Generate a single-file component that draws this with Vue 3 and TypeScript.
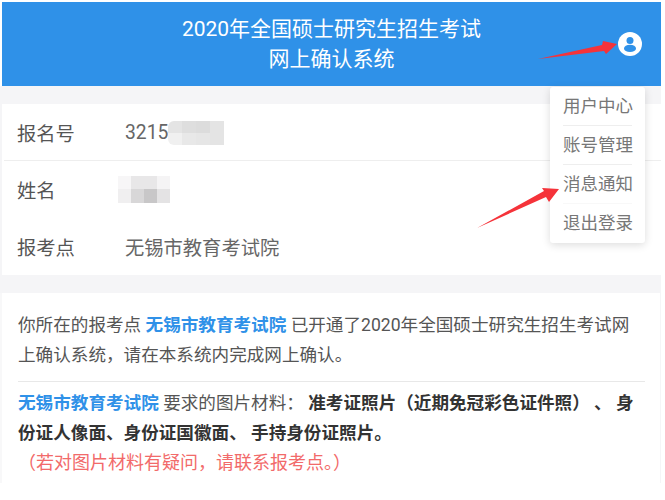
<script setup lang="ts">
const menu: string[] = ['用户中心', '账号管理', '消息通知', '退出登录']
const idBlur: string[] = ['#e4e4e4', '#dedede', '#dcdcdc', '#e4e4e4', '#f0f0f0', '#e8e8e8', '#e6e6e6', '#e4e4e4']
const nameBlur: string[] = ['#f7f6f7', '#e8e7e8', '#e8e7e8', '#f5f4f5', '#f0eff0', '#d8d7d8', '#c8c7c8', '#e4e3e4']
</script>

<template>
  <div class="page">
    <header class="top">
      <div class="title">2020年全国硕士研究生招生考试<br />网上确认系统</div>
      <svg class="avatar" viewBox="0 0 24 24" width="24" height="24">
        <circle cx="12" cy="12" r="12" fill="#fff" />
        <circle cx="12" cy="8.6" r="3.5" fill="#2f91e8" />
        <ellipse cx="12" cy="16.4" rx="6" ry="3.6" fill="#2f91e8" />
      </svg>
    </header>

    <section class="card info">
      <div class="row line">
        <span class="label">报名号</span>
        <span class="value">3215</span>
        <div class="mosaic id-mosaic">
          <i v-for="(c, i) in idBlur" :key="i" :style="{ background: c }"></i>
        </div>
      </div>
      <div class="row">
        <span class="label">姓名</span>
        <div class="mosaic name-mosaic">
          <i v-for="(c, i) in nameBlur" :key="i" :style="{ background: c }"></i>
        </div>
      </div>
      <div class="row">
        <span class="label">报考点</span>
        <span class="value">无锡市教育考试院</span>
      </div>
    </section>

    <section class="card notice">
      <p class="para first">
        你所在的报考点 <b class="blue">无锡市教育考试院</b> 已开通了2020年全国硕士研究生招生考试网上确认系统，请在本系统内完成网上确认。
      </p>
      <p class="para">
        <b class="blue">无锡市教育考试院</b> 要求的图片材料： <b class="dark">准考证照片（近期免冠彩色证件照） 、 身份证人像面、身份证国徽面、 手持身份证照片。</b>
      </p>
      <p class="para red">（若对图片材料有疑问，请联系报考点。）</p>
    </section>

    <ul class="menu">
      <li v-for="m in menu" :key="m">{{ m }}</li>
    </ul>

    <svg class="arrows" viewBox="0 0 665 500" width="665" height="500">
      <polygon fill="#f5333a" points="538,59 602,45 603,41 617,44 606,54 604,51" />
      <polygon fill="#f5333a" points="477,228 544,191 542,188 559,189 549,202 546,197" />
    </svg>
  </div>
</template>

<style>
html, body { margin: 0; background: #fff; }
</style>

<style scoped>
.page {
  position: relative;
  width: 665px;
  height: 500px;
  overflow: hidden;
  box-sizing: border-box;
  padding: 2px 4px 0 0;
  background: #fff;
  font-family: Roboto, "Noto Sans CJK SC", sans-serif;
  color: #555;
}
.top {
  position: relative;
  height: 84px;
  margin-left: 2px;
  background: #2f91e8;
  color: #fff;
  display: flex;
  align-items: center;
  justify-content: center;
}
.title {
  font-size: 21px;
  line-height: 30px;
  text-align: center;
}
.avatar { position: absolute; right: 19px; top: 30px; }
.info {
  border-top: 18px solid #f5f5f7;
  border-bottom: 18px solid #f5f5f7;
  background: #fff;
  box-shadow: inset 2px 0 0 #f5f5f7;
}
.row {
  display: flex;
  align-items: center;
  height: 57px;
  padding-left: 17px;
  font-size: 19.3px;
  color: #555;
}
.row.line { box-shadow: inset 0 -1px 0 #eee; margin-left: 4px; padding-left: 13px; }
.label { width: 108px; flex: none; }
.value { color: #666; }
.mosaic { display: grid; }
.mosaic i { display: block; }
.id-mosaic {
  grid-template-columns: repeat(4, 14px);
  grid-auto-rows: 12px;
  border-radius: 6px 0 0 6px;
  overflow: hidden;
}
.name-mosaic {
  grid-template-columns: repeat(4, 13px);
  grid-auto-rows: 13.5px;
  margin-left: -7px;
  margin-top: -1px;
}
.notice {
  height: 190px;
  padding: 17px 16px 0 18px;
  box-sizing: border-box;
  background: #fff;
  box-shadow: inset 2px 0 0 #f8f8f9, inset -1px 0 0 #f5f5f7;
}
.para {
  margin: 0;
  font-size: 17.6px;
  line-height: 30px;
  color: #555;
}
.para.first {
  padding-bottom: 11px;
  border-bottom: 1px solid #e8e8e8;
  margin-bottom: 6px;
}
.blue { color: #2f91e8; font-weight: 700; }
.dark { color: #333; font-weight: 700; }
.para.red { color: #f26a6a; font-size: 18px; }
.menu {
  position: absolute;
  left: 550px;
  top: 87px;
  width: 95px;
  margin: 0;
  padding: 0 13px;
  box-sizing: border-box;
  list-style: none;
  background: #fff;
  border-radius: 3px;
  box-shadow: 0 2px 8px rgba(0, 0, 0, 0.14);
}
.menu li {
  height: 39px;
  line-height: 38px;
  font-size: 17.5px;
  color: #777;
  white-space: nowrap;
  border-bottom: 1px solid #eee;
  box-sizing: border-box;
}
.menu li:nth-child(3) { border-bottom-color: #f8f8f8; }
.menu li:last-child { border-bottom: 0; }
.arrows { position: absolute; left: 0; top: 0; pointer-events: none; }
</style>
